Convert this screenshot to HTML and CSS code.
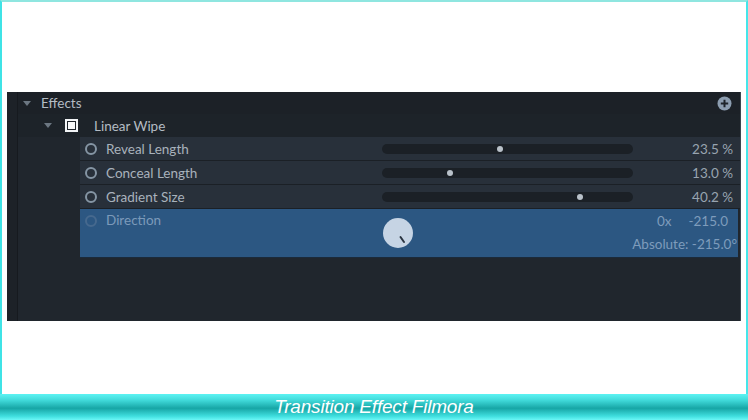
FILE: index.html
```html
<!DOCTYPE html>
<html>
<head>
<meta charset="utf-8">
<link rel="stylesheet" href="styles.css">
</head>
<body>
<div class="frame">
  <div class="panel">
    <div class="gutter"></div>
    <div class="main">
      <div class="row-effects">
        <span class="tri"></span>
        <span class="title">Effects</span>
        <span class="plus">
          <svg width="15" height="15" viewBox="0 0 15 15"><circle cx="7.5" cy="7.5" r="7" fill="#8c9db0"/><path d="M7.5 3.8v7.4M3.8 7.5h7.4" stroke="#1d232a" stroke-width="2"/></svg>
        </span>
      </div>
      <div class="row-wipe">
        <span class="tri"></span>
        <span class="check"><span class="check-in"></span></span>
        <span class="title">Linear Wipe</span>
      </div>
      <div class="params">
        <div class="param">
          <span class="ring"></span>
          <span class="label">Reveal Length</span>
          <span class="track"><span class="dot" style="left:115px"></span></span>
          <span class="value">23.5 %</span>
        </div>
        <div class="param">
          <span class="ring"></span>
          <span class="label">Conceal Length</span>
          <span class="track"><span class="dot" style="left:65px"></span></span>
          <span class="value">13.0 %</span>
        </div>
        <div class="param">
          <span class="ring"></span>
          <span class="label">Gradient Size</span>
          <span class="track"><span class="dot" style="left:195px"></span></span>
          <span class="value">40.2 %</span>
        </div>
        <div class="direction">
          <span class="ring"></span>
          <span class="label">Direction</span>
          <span class="knob"><svg width="32" height="32" viewBox="0 0 32 32"><circle cx="16" cy="16" r="15" fill="#c6d4e4"/><path d="M18.5 20l3.5 5" stroke="#2a3440" stroke-width="2" stroke-linecap="round"/></svg></span>
          <div class="dir-vals">
            <div class="dir-top"><span class="turns">0x</span><span>-215.0</span></div>
            <div class="dir-abs">Absolute: -215.0°</div>
          </div>
        </div>
      </div>
    </div>
  </div>
</div>
<div class="caption">Transition Effect Filmora</div>
</body>
</html>
```
FILE: styles.css
```css
html, body {
  margin: 0;
  padding: 0;
  width: 748px;
  height: 420px;
  overflow: hidden;
  background: #ffffff;
  font-family: Lato, "Open Sans", sans-serif;
}
.frame {
  box-sizing: border-box;
  height: 394px;
  border-left: 2px solid #3fe3e6;
  border-right: 2px solid #45e6ea;
  border-top: 2px solid #8fe6e0;
  padding-top: 90px;
  padding-left: 5px;
}
.panel {
  display: flex;
  width: 734px;
  height: 229px;
  background: #20262d;
  border-right: 1px solid #3b4550;
  box-sizing: border-box;
}
.gutter {
  width: 10px;
  background: #1d2228;
  border-right: 1px solid #161a1f;
}
.main {
  flex: 1;
  display: flex;
  flex-direction: column;
}
.row-effects {
  height: 22px;
  display: flex;
  align-items: center;
  background: #1c2127;
  padding-left: 5px;
}
.tri {
  width: 0;
  height: 0;
  border-left: 4px solid transparent;
  border-right: 4px solid transparent;
  border-top: 5px solid #6c7782;
}
.title {
  color: #b4bcc4;
  font-size: 13.5px;
}
.row-effects .title {
  margin-left: 10px;
}
.plus {
  margin-left: auto;
  margin-right: 8px;
  display: flex;
}
.row-wipe {
  height: 23px;
  display: flex;
  align-items: center;
  background: #1d2329;
  padding-left: 26px;
}
.check {
  box-sizing: border-box;
  width: 13px;
  height: 13px;
  border: 2px solid #f2f4f6;
  padding: 1px;
  margin-left: 13px;
  display: flex;
}
.check-in {
  flex: 1;
  background: #f6f7f8;
}
.row-wipe .title {
  margin-left: 16px;
}
.params {
  margin-left: 62px;
  display: flex;
  flex-direction: column;
}
.param {
  height: 23px;
  display: flex;
  align-items: center;
  background: #28303a;
  border-bottom: 1px solid #1b2026;
  padding-left: 5px;
  padding-right: 7px;
}
.ring {
  box-sizing: border-box;
  width: 12px;
  height: 12px;
  border: 2px solid #8595a4;
  border-radius: 50%;
}
.label {
  margin-left: 9px;
  width: 276px;
  color: #a8b2bc;
  font-size: 13.5px;
}
.track {
  position: relative;
  width: 251px;
  height: 10px;
  border-radius: 5px;
  background: #1b2026;
}
.dot {
  position: absolute;
  top: 2px;
  width: 6px;
  height: 6px;
  border-radius: 50%;
  background: #b9c1c9;
}
.value {
  margin-left: auto;
  color: #98a4b0;
  font-size: 13.5px;
}
.direction {
  height: 49px;
  box-sizing: border-box;
  display: flex;
  align-items: flex-start;
  background: #2c5782;
  border-bottom: 1px solid #1b2a3a;
  padding-left: 5px;
  padding-right: 1px;
  margin-right: 2px;
}
.direction .ring {
  margin-top: 6px;
  border-color: #46698e;
}
.direction .label {
  color: #7c9aba;
  margin-top: 3px;
}
.knob {
  margin-top: 8px;
  display: flex;
}
.dir-vals {
  margin-left: auto;
  color: #7e9cbc;
  font-size: 13.5px;
  text-align: right;
  padding-top: 3px;
}
.dir-top {
  display: flex;
  justify-content: flex-end;
  gap: 17px;
  padding-right: 9px;
  line-height: 18px;
}
.dir-abs {
  margin-top: 5px;
  line-height: 18px;
}
.caption {
  height: 26px;
  background: linear-gradient(to bottom, #5df3f3 0%, #3fd8d8 25%, #17a6a6 55%, #3fdede 85%, #6cf7f7 100%);
  color: #ffffff;
  font-family: "Liberation Sans", Arial, sans-serif;
  font-style: italic;
  font-size: 19px;
  text-align: center;
  line-height: 26px;
  letter-spacing: -0.2px;
}
```
